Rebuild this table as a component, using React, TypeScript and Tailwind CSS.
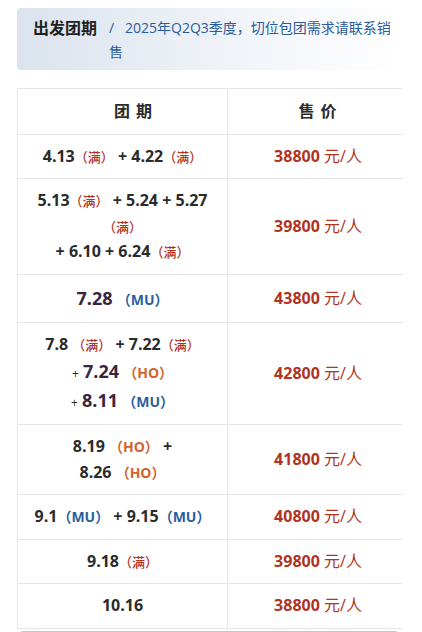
const FONT = "font-['Open_Sans','Noto_Sans_CJK_SC',sans-serif]";

const Full = () => <span className="text-[13px] font-medium text-[#b3321f]">（满）</span>;
const Mu = () => <span className="text-[14px] font-bold text-[#2a5f9e]">（MU）</span>;
const Ho = () => <span className="text-[14px] font-bold text-[#d0652c]">（HO）</span>;
const Big = ({ children }: { children: React.ReactNode }) => (
  <span className="text-[18px] font-bold text-[#3a2540]">{children}</span>
);
const Plus = () => <span className="text-[12px] font-normal">+</span>;

const rows: { dates: React.ReactNode; price: string }[] = [
  {
    dates: (
      <>
        4.13<Full /> + 4.22<Full />
      </>
    ),
    price: "38800",
  },
  {
    dates: (
      <>
        5.13<Full /> + 5.24 + 5.27
        <br />
        <Full />
        <br />+ 6.10 + 6.24<Full />
      </>
    ),
    price: "39800",
  },
  {
    dates: (
      <>
        <Big>7.28</Big> <Mu />
      </>
    ),
    price: "43800",
  },
  {
    dates: (
      <>
        7.8 <Full /> + 7.22<Full />
        <br />
        <Plus /> <Big>7.24</Big> <Ho />
        <br />
        <Plus /> <Big>8.11</Big> <Mu />
      </>
    ),
    price: "42800",
  },
  {
    dates: (
      <>
        8.19 <Ho /> +
        <br />
        8.26 <Ho />
      </>
    ),
    price: "41800",
  },
  {
    dates: (
      <>
        9.1<Mu /> + 9.15<Mu />
      </>
    ),
    price: "40800",
  },
  {
    dates: (
      <>
        9.18<Full />
      </>
    ),
    price: "39800",
  },
  { dates: <>10.16</>, price: "38800" },
];

export default function App() {
  return (
    <div className={`${FONT} bg-white min-h-[632px] pt-2`}>
      <div className="mx-[17px] w-[386px]">
        <div className="flex items-start rounded-sm bg-linear-to-r from-[#dbe3ee] via-[#eef2f7] to-white pl-4 pr-1 pt-2 pb-1.5">
          <h2 className="shrink-0 text-[16px] leading-6 font-bold text-[#1f1f1f]">出发团期</h2>
          <p className="ml-3 text-[14px] leading-6 text-[#2a5b9b]">
            /&nbsp;&nbsp;&nbsp;2025年Q2Q3季度，切位包团需求请联系销售
          </p>
        </div>

        <div className="mt-[18px] overflow-hidden">
          <table className="w-[392px] border-collapse text-center text-[16px] leading-[1.6] text-[#2b2b2b]">
            <colgroup>
              <col className="w-[210px]" />
              <col />
            </colgroup>
            <thead>
              <tr>
                <th className="border border-[#e6e6e6] pl-[22px] py-[9.5px] text-[16px] font-bold tracking-[1px]">团 期</th>
                <th className="border border-[#e6e6e6] py-[9.5px] text-[16px] font-bold tracking-[1px]">售 价</th>
              </tr>
            </thead>
            <tbody>
              {rows.map((r, i) => (
                <tr key={i}>
                  <td className="border border-[#e6e6e6] px-2 py-[9px] font-bold">{r.dates}</td>
                  <td className="border border-[#e6e6e6] px-2.5 py-[9px] text-[#b0341f]">
                    <span className="font-bold">{r.price}</span> 元/人
                  </td>
                </tr>
              ))}
            </tbody>
          </table>
        </div>
        {/* horizontal scroll indicator */}
        <div className="mx-[3px] mt-[2px] h-[6px] w-[378px] rounded-full bg-[#c4c6c9]" />
      </div>
    </div>
  );
}
